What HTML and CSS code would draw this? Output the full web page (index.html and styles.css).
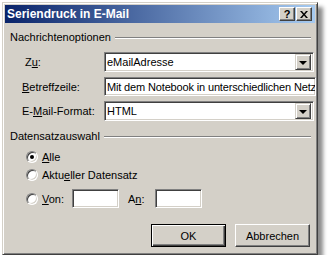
FILE: index.html
```html
<!DOCTYPE html>
<html lang="de">
<head>
<meta charset="utf-8">
<title>Seriendruck in E-Mail</title>
<link rel="stylesheet" href="styles.css">
</head>
<body>
<div class="window">
  <div class="titlebar">
    <span class="title">Seriendruck in E-Mail</span>
    <div class="caption-buttons">
      <span class="cap-btn help">?</span>
      <span class="cap-btn close">
        <svg width="8" height="7" viewBox="0 0 8 7"><path d="M0 0h2l2 2.5L6 0h2L5 3.5 8 7H6L4 4.5 2 7H0l3-3.5z" fill="#000"/></svg>
      </span>
    </div>
  </div>
  <div class="client">
    <div class="group-head"><span>Nachrichtenoptionen</span><span class="etch"></span></div>
    <div class="form">
      <label class="lbl lbl-zu">Z<u>u</u>:</label>
      <div class="combo"><span class="value">eMailAdresse</span><span class="drop"><span class="arrow"></span></span></div>
      <label class="lbl"><u>B</u>etreffzeile:</label>
      <div class="textbox wide"><span class="value subject">Mit dem Notebook in unterschiedlichen Netz</span></div>
      <label class="lbl">E-<u>M</u>ail-Format:</label>
      <div class="combo"><span class="value">HTML</span><span class="drop"><span class="arrow"></span></span></div>
    </div>
    <div class="group-head second"><span>Datensatzauswahl</span><span class="etch"></span></div>
    <div class="radios">
      <div class="radio-row"><span class="radio checked"></span><span><u>A</u>lle</span></div>
      <div class="radio-row"><span class="radio"></span><span>Aktu<u>e</u>ller Datensatz</span></div>
      <div class="radio-row range">
        <span class="radio"></span><span class="von"><u>V</u>on:</span>
        <span class="textbox small"></span>
        <span class="an">A<u>n</u>:</span>
        <span class="textbox small"></span>
      </div>
    </div>
    <div class="buttons">
      <button class="btn default">OK</button>
      <button class="btn">Abbrechen</button>
    </div>
  </div>
</div>
</body>
</html>
```
FILE: styles.css
```css
* { box-sizing: border-box; }
html, body { margin: 0; padding: 0; background: #fff; }
body { padding: 2px 0 0 2px; font-family: "Liberation Sans", Arial, sans-serif; font-size: 11px; color: #000; }

.window {
  width: 316px;
  height: 253px;
  background: #d4d0c8;
  border: 1px solid;
  border-color: #d4d0c8 #404040 #404040 #d4d0c8;
  box-shadow: inset 1px 1px #fff, inset -1px -1px #808080, 5px 5px 4px rgba(0,0,0,0.45);
  padding: 2px;
  display: flex;
  flex-direction: column;
}

.titlebar {
  height: 18px;
  background: linear-gradient(to right, #0a246a, #a6caf0);
  display: flex;
  align-items: center;
  justify-content: space-between;
  padding: 0 3px 0 2px;
}
.title { color: #fff; font-weight: bold; font-size: 12px; }
.caption-buttons { display: flex; gap: 1px; }
.cap-btn {
  width: 16px; height: 14px;
  background: #d4d0c8;
  border: 1px solid;
  border-color: #fff #404040 #404040 #fff;
  box-shadow: inset -1px -1px #808080;
  display: flex; align-items: center; justify-content: center;
  font-weight: bold; font-size: 11px; line-height: 1;
}
.cap-btn.help { padding-top: 1px; }

.client { flex: 1; padding: 8px 4px 0 5px; display: flex; flex-direction: column; }

.group-head { display: flex; align-items: center; height: 13px; line-height: 13px; }
.group-head .etch { flex: 1; height: 2px; border-top: 1px solid #808080; border-bottom: 1px solid #fff; margin-left: 4px; margin-top: 1px; }
.group-head.second { margin-top: 9px; }

.form {
  display: grid;
  grid-template-columns: 82px 1fr;
  row-gap: 5px;
  margin-top: 8px;
  align-items: center;
  padding-left: 12px;
}
.lbl-zu { padding-left: 3px; }

.combo, .textbox {
  background: #fff;
  border: 1px solid;
  border-color: #808080 #fff #fff #808080;
  box-shadow: inset 1px 1px #404040, inset -1px -1px #d4d0c8;
  display: flex; align-items: center;
  overflow: hidden;
  white-space: nowrap;
}
.combo { height: 20px; width: 210px; padding: 0 2px 0 2px; }
.textbox.wide { height: 19px; width: 212px; padding-left: 2px; }
.subject { letter-spacing: -0.15px; }
.combo .value { flex: 1; }
.drop {
  width: 16px; height: 16px;
  background: #d4d0c8;
  border: 1px solid;
  border-color: #d4d0c8 #404040 #404040 #d4d0c8;
  box-shadow: inset 1px 1px #fff, inset -1px -1px #808080;
  display: flex; align-items: center; justify-content: center;
}
.arrow { width: 0; height: 0; border-left: 4px solid transparent; border-right: 4px solid transparent; border-top: 4px solid #000; margin-top: 1px; }

.radios { padding-left: 16px; margin-top: 7px; display: flex; flex-direction: column; gap: 4px; }
.radio-row { display: flex; align-items: center; height: 14px; }
.radio-row.range { height: 19px; margin-top: 3px; }
.radio {
  width: 12px; height: 12px; border-radius: 50%;
  background: #fff;
  border: 1px solid;
  border-color: #808080 #fff #fff #808080;
  box-shadow: inset 1px 1px #404040, inset -1px -1px #d4d0c8;
  margin-right: 4px;
  position: relative;
  flex: none;
}
.radio.checked::after {
  content: ""; position: absolute; left: 3px; top: 3px; width: 4px; height: 4px; border-radius: 50%; background: #000;
}
.von { width: 30px; }
.textbox.small { width: 47px; height: 19px; }
.an { margin-left: 9px; width: 27px; }

.buttons { display: flex; justify-content: flex-end; gap: 9px; margin-top: 16px; padding-right: 1px; }
.btn {
  width: 75px; height: 23px;
  font-family: inherit; font-size: 11px; color: #000;
  background: #d4d0c8;
  border: 1px solid;
  border-color: #fff #404040 #404040 #fff;
  box-shadow: inset -1px -1px #808080;
  padding: 0;
}
.btn.default {
  border-color: #000;
  box-shadow: inset 1px 1px #fff, inset -1px -1px #404040, inset -2px -2px #808080;
}
```
